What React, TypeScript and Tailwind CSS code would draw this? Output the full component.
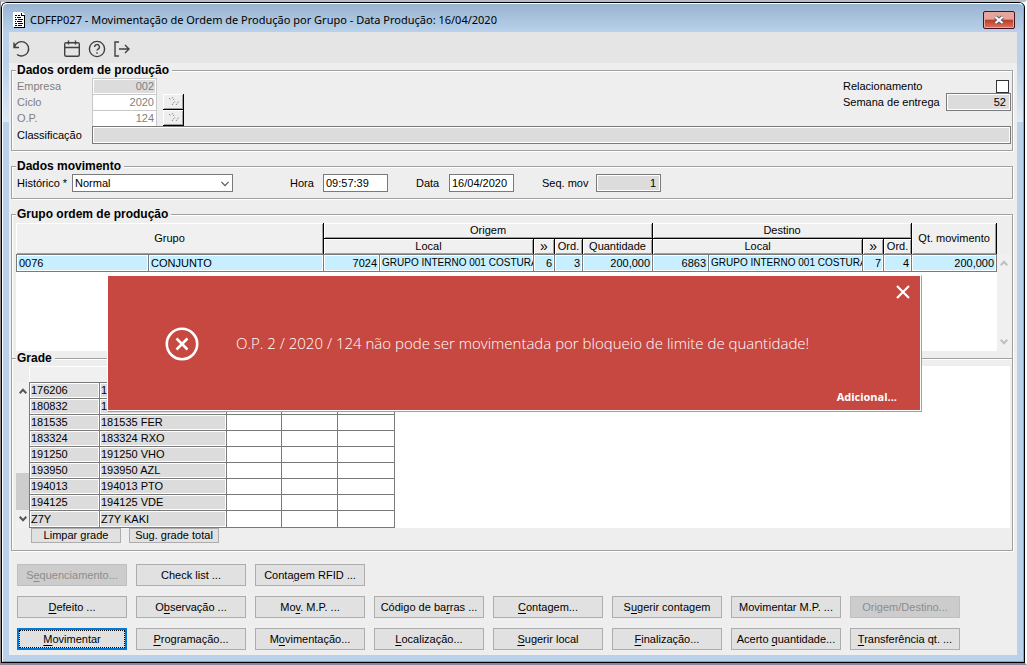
import { useState } from "react";

const ui = "font-['Liberation_Sans',Arial,sans-serif]";
const segoe = "font-['Open_Sans','Noto_Sans',sans-serif]";

const grades = [
  ["176206", "176206"],
  ["180832", "180832"],
  ["181535", "181535 FER"],
  ["183324", "183324 RXO"],
  ["191250", "191250 VHO"],
  ["193950", "193950 AZL"],
  ["194013", "194013 PTO"],
  ["194125", "194125 VDE"],
  ["Z7Y", "Z7Y KAKI"],
];

// "_" marks the access key of the button: the next letter is underlined
const actions = [
  ["S_equenciamento...", "Check list ...", "Conta_gem RFID ..."],
  ["_Defeito ...", "O_bservação ...", "Mo_v. M.P. ...", "Código de ba_rras ...", "_Contagem...", "S_ugerir contagem", "Movimentar M.P. ...", "Origem/Destino..."],
  ["_Movimentar", "_Programação...", "M_ovimentação...", "_Localização...", "_Sugerir local", "_Finalização...", "Acerto _quantidade...", "_Transferência qt. ..."],
];

const disabledActions = ["S_equenciamento...", "Origem/Destino..."];

function Label({ text }: { text: string }) {
  const i = text.indexOf("_");
  if (i < 0) return <>{text}</>;
  return (
    <>
      {text.slice(0, i)}
      <span className="underline underline-offset-2">{text[i + 1]}</span>
      {text.slice(i + 2)}
    </>
  );
}

function Arrow({ down = false, className = "" }: { down?: boolean; className?: string }) {
  return (
    <svg viewBox="0 0 8 6" className={`h-[6px] w-[8px] ${className}`} fill="none" stroke="currentColor" strokeWidth="2">
      <path d={down ? "M0.7 0.8L4 4.2L7.3 0.8" : "M0.7 5.2L4 1.8L7.3 5.2"} />
    </svg>
  );
}

function Group({ title, className = "", children }: { title: string; className?: string; children: React.ReactNode }) {
  return (
    <fieldset className={`mr-1 ml-0.5 min-w-0 border border-[#a0a0a0] pr-px pl-1 shadow-[1px_1px_0_#fff,inset_1px_1px_0_#fff] ${className}`}>
      <legend className="bg-[#eeeeee] pr-[3px] pl-px text-[12px] leading-[15px] font-bold">{title}</legend>
      {children}
    </fieldset>
  );
}

function LookupButton({ label }: { label: string }) {
  return (
    <button
      type="button"
      aria-label={label}
      className="ml-1.5 flex h-4 w-[21px] items-center justify-center border-r border-b border-black bg-[#eeeeee] text-[#8c8c8c] shadow-[inset_1px_1px_0_#fff,inset_-1px_-1px_0_#a0a0a0]"
    >
      <svg viewBox="0 0 11 9" className="h-[9px] w-[11px]" fill="none" stroke="currentColor" strokeDasharray="1.4 0.8">
        <path d="M1 1L3 3M4 0L6 3M4 8L7 4M8 8L11 4" />
      </svg>
    </button>
  );
}

const head = "border-r border-black bg-[#f0f0f0] p-0 text-center font-normal shadow-[inset_1px_1px_0_#fff,inset_-1px_-1px_0_#a0a0a0]";
const cell = "overflow-hidden border border-l-0 border-[#7a7a7a] bg-[#c8efff] px-0.5 py-0 whitespace-nowrap first:border-l shadow-[inset_0_0_0_1px_#fff]";
const readonlyField = "border border-[#7a7a7a] bg-[#dcdcdc] px-1 text-right shadow-[inset_0_0_0_1px_#fff]";
const textField = "h-[18px] w-[65px] border border-[#7a7a7a] bg-white px-0.5";

export default function App() {
  const [open, setOpen] = useState(true);

  return (
    <div className={`relative border-t-2 border-r-2 border-b-2 border-l border-t-[#b9bdc9] border-r-white border-b-[#8a8898] border-l-[#8c8c8c] bg-white text-[11px] text-black ${ui}`}>
      <div className="rounded-t-[6px] border-t border-b border-l border-black bg-[#b9d1ea]">
        <div className="rounded-t-[5px] border-r border-black">
          <div className="rounded-t-[5px] border border-t-white border-r-[#35c8e0] border-b-[#35c8e0] border-l-white bg-[linear-gradient(#b9d1ea_60px,#dfe9f5_118px,#b9d1ea_118px)] px-1.5 pb-1.5">
            <header className="-mx-1.5 flex h-7 items-center rounded-t-[5px] bg-linear-to-b from-[#99b4d1] to-[#b9d1ea] pt-1 pr-2 pl-2.5">
              <svg viewBox="0 0 13 16" className="h-4 w-[13px]" shapeRendering="crispEdges">
                <path d="M0 0h9l3 3v12H0z" fill="#fff" />
                <path d="M12 4v12H1v-1h10V4H8V1h1v2h3z" fill="#000" />
                <path d="M2 3h2v1H2zM5 3h2v1H5zM2 5h1v1H2zM4 5h4v1H4zM2 7h2v1H2zM5 7h5v1H5zM2 9h1v1H2zM4 9h5v1H4zM2 11h2v1H2zM5 11h5v1H5zM2 13h2v1H2zM5 13h4v1H5z" fill="#000" />
              </svg>
              <h1 className="ml-1 font-['Noto_Sans','Open_Sans',sans-serif] text-[11px]">CDFFP027 - Movimentação de Ordem de Produção por Grupo - Data Produção: 16/04/2020</h1>
              <button type="button" aria-label="Fechar janela" className="ml-auto flex h-[18px] w-8 items-center justify-center rounded-[2px] border border-[#4a1020] bg-linear-to-b from-[#e5a59c] from-45% via-[#bb3a24] via-50% to-[#d87563] shadow-[inset_0_0_0_1px_#e8a79c]">
                <svg viewBox="0 0 12 10" className="h-[10px] w-3">
                  <path d="M2.5 2L9.5 8M9.5 2L2.5 8" stroke="#535666" strokeWidth="4" />
                  <path d="M2.5 2L9.5 8M9.5 2L2.5 8" stroke="#fff" strokeWidth="2.2" />
                </svg>
              </button>
            </header>

            <main className="bg-[#eeeeee] pb-[5px]">
              <div className="flex h-[31px] items-center bg-[#e5e5e5] pt-0.5 pl-1 text-[#404040]">
                <button type="button" aria-label="Desfazer">
                  <svg viewBox="0 0 18 18" className="size-[18px]" fill="none" stroke="currentColor" strokeWidth="1.4">
                    <path d="M1 2.5v5h5M1.5 7A7.2 7.2 0 1 1 4 14.5" />
                  </svg>
                </button>
                <button type="button" aria-label="Calendário" className="ml-8">
                  <svg viewBox="0 0 18 18" className="size-[18px]" fill="none" stroke="currentColor" strokeWidth="1.4">
                    <rect x="1.7" y="2.7" width="14.6" height="13.6" rx="1.5" />
                    <path d="M2 7.5h14M5.5 0.5v4M12.5 0.5v4" />
                  </svg>
                </button>
                <button type="button" aria-label="Ajuda" className="ml-[7px]">
                  <svg viewBox="0 0 18 18" className="size-[18px]" fill="none" stroke="currentColor" strokeWidth="1.4">
                    <circle cx="9" cy="9" r="7.6" />
                    <path d="M6.6 7a2.4 2.4 0 1 1 3.5 2.1c-.8.4-1.1.7-1.1 1.5M9 12.2v1.5" />
                  </svg>
                </button>
                <button type="button" aria-label="Sair" className="ml-[7px]">
                  <svg viewBox="0 0 18 18" className="size-[18px]" fill="none" stroke="currentColor" strokeWidth="1.4">
                    <path d="M6 2H2v14h4M6 9h10M12 5l4 4l-4 4" />
                  </svg>
                </button>
              </div>

              <Group title="Dados ordem de produção" className="pb-1.5">
                <div className="flex justify-between pl-px">
                  <div className="text-[#7f7f7f]">
                    <div className="flex h-4 items-center">
                      <label htmlFor="empresa" className="w-[75px]">Empresa</label>
                      <input id="empresa" readOnly value="002" className="h-[17px] w-[65px] border border-[#c8c8c8] bg-[#dcdcdc] px-0.5 text-right shadow-[inset_0_0_0_1px_#fff]" />
                    </div>
                    <div className="flex h-4 items-center">
                      <label htmlFor="ciclo" className="w-[75px]">Ciclo</label>
                      <input id="ciclo" readOnly value="2020" className="h-[17px] w-[65px] border border-[#c8c8c8] bg-white px-0.5 text-right" />
                      <LookupButton label="Pesquisar ciclo" />
                    </div>
                    <div className="flex h-4 items-center">
                      <label htmlFor="op" className="w-[75px]">O.P.</label>
                      <input id="op" readOnly value="124" className="h-[17px] w-[65px] border border-[#c8c8c8] bg-white px-0.5 text-right" />
                      <LookupButton label="Pesquisar O.P." />
                    </div>
                  </div>
                  <div>
                    <div className="flex h-4 items-center justify-between">
                      <label htmlFor="relacionamento">Relacionamento</label>
                      <input id="relacionamento" type="checkbox" className="mt-px mr-0.5 size-[13px] appearance-none border border-[#333] bg-white" />
                    </div>
                    <div className="flex h-4 items-center">
                      <label htmlFor="semana" className="w-[103px]">Semana de entrega</label>
                      <input id="semana" readOnly value="52" className={`h-[18px] w-[65px] ${readonlyField}`} />
                    </div>
                  </div>
                </div>
                <div className="flex h-[18px] items-center pl-px">
                  <label htmlFor="classificacao" className="w-[75px] shrink-0">Classificação</label>
                  <input id="classificacao" readOnly value="" className={`h-[18px] min-w-0 grow ${readonlyField}`} />
                </div>
              </Group>

              <Group title="Dados movimento" className="mt-2 pb-1.5">
                <div className="flex h-[18px] items-center pl-px">
                  <label htmlFor="historico" className="w-[55px]">Histórico *</label>
                  <span className="relative">
                    <select id="historico" className="block h-[18px] w-[161px] appearance-none border border-[#7a7a7a] bg-white px-0.5">
                      <option>Normal</option>
                    </select>
                    <svg viewBox="0 0 8 6" className="pointer-events-none absolute top-[7px] right-1 h-[6px] w-[8px]" fill="none" stroke="#555" strokeWidth="1.2">
                      <path d="M0.4 0.8L4 4.6L7.6 0.8" />
                    </svg>
                  </span>
                  <label htmlFor="hora" className="ml-[57px] w-[33px]">Hora</label>
                  <input id="hora" defaultValue="09:57:39" className={textField} />
                  <label htmlFor="data" className="ml-7 w-[33px]">Data</label>
                  <input id="data" defaultValue="16/04/2020" className={textField} />
                  <label htmlFor="seq" className="ml-7 w-[54px]">Seq. mov</label>
                  <input id="seq" readOnly value="1" className={`h-[18px] w-[65px] ${readonlyField}`} />
                </div>
              </Group>

              <Group title="Grupo ordem de produção" className="mt-2 border-b-0 pb-2">
                <div className="mr-px flex h-[129px] pt-px">
                  <div className="grow overflow-hidden bg-white">
                    <table className="w-[981px] table-fixed border-separate border-spacing-0">
                      <colgroup>
                        <col className="w-[133px]" />
                        <col className="w-[175px]" />
                        <col className="w-[56px]" />
                        <col className="w-[154px]" />
                        <col className="w-[21px]" />
                        <col className="w-[28px]" />
                        <col className="w-[70px]" />
                        <col className="w-[56px]" />
                        <col className="w-[154px]" />
                        <col className="w-[21px]" />
                        <col className="w-[28px]" />
                        <col className="w-[85px]" />
                      </colgroup>
                      <thead>
                        <tr className="h-4">
                          <th rowSpan={2} colSpan={2} className={head}>Grupo</th>
                          <th colSpan={5} className={`border-b leading-[15px] ${head}`}>Origem</th>
                          <th colSpan={4} className={`border-b leading-[15px] ${head}`}>Destino</th>
                          <th rowSpan={2} className={head}>Qt. movimento</th>
                        </tr>
                        <tr className="h-[15px] leading-[15px]">
                          <th colSpan={2} className={head}>Local</th>
                          <th className={`text-[14px] leading-[15px] ${head}`}>»</th>
                          <th className={head}>Ord.</th>
                          <th className={head}>Quantidade</th>
                          <th colSpan={2} className={head}>Local</th>
                          <th className={`text-[14px] leading-[15px] ${head}`}>»</th>
                          <th className={head}>Ord.</th>
                        </tr>
                      </thead>
                      <tbody>
                        <tr className="h-[18px] leading-4">
                          <td className={cell}>0076</td>
                          <td className={cell}>CONJUNTO</td>
                          <td className={`text-right ${cell}`}>7024</td>
                          <td className={`text-[10px] ${cell}`}>GRUPO INTERNO 001 COSTURA</td>
                          <td className={`text-right ${cell}`}>6</td>
                          <td className={`text-right ${cell}`}>3</td>
                          <td className={`text-right ${cell}`}>200,000</td>
                          <td className={`text-right ${cell}`}>6863</td>
                          <td className={`text-[10px] ${cell}`}>GRUPO INTERNO 001 COSTURA</td>
                          <td className={`text-right ${cell}`}>7</td>
                          <td className={`text-right ${cell}`}>4</td>
                          <td className={`text-right ${cell}`}>200,000</td>
                        </tr>
                      </tbody>
                    </table>
                  </div>
                  <div className="mt-[31px] flex w-[13px] shrink-0 flex-col items-center justify-between bg-[#f0f0f0] py-1.5 text-[#bfbfbf]">
                    <Arrow />
                    <Arrow down />
                  </div>
                </div>
              </Group>

              <Group title="Grade" className="-mt-2 pb-[7px]">
                <div className="mr-px flex">
                  <div className="mt-4 flex w-[13px] shrink-0 flex-col items-center bg-[#f0f0f0] py-1.5 text-[#555]">
                    <Arrow />
                    <div className="mt-auto mb-1.5 h-[37px] w-full bg-[#cdcdcd]" />
                    <Arrow down />
                  </div>
                  <div className="grow bg-white">
                    <table className="w-[366px] table-fixed border-separate border-spacing-0">
                      <colgroup>
                        <col className="w-[71px]" />
                        <col className="w-[127px]" />
                        <col className="w-[55px]" />
                        <col className="w-[56px]" />
                        <col className="w-[57px]" />
                      </colgroup>
                      <thead>
                        <tr className="h-[17px]">
                          <th colSpan={5} className="border-b border-[#7a7a7a] bg-[#f0f0f0] p-0 shadow-[inset_1px_1px_0_#fff]" />
                        </tr>
                      </thead>
                      <tbody>
                        {grades.map(([code, name]) => (
                          <tr key={code} className="h-4 last:h-[17px]">
                            <td className="border-r border-b border-l border-[#7a7a7a] bg-[#dcdcdc] px-px py-0 leading-[15px] shadow-[inset_0_0_0_1px_#fff]">{code}</td>
                            <td className="border-r border-b border-[#7a7a7a] bg-[#dcdcdc] px-px py-0 leading-[15px] shadow-[inset_0_0_0_1px_#fff]">{name}</td>
                            <td className="border-r border-b border-[#7a7a7a] p-0" />
                            <td className="border-r border-b border-[#7a7a7a] p-0" />
                            <td className="border-r border-b border-[#7a7a7a] p-0" />
                          </tr>
                        ))}
                      </tbody>
                    </table>
                  </div>
                </div>
                <div className="flex gap-2 pl-[15px]">
                  <button type="button" className="h-[15px] w-[90px] border border-[#adadad] bg-[#e1e1e1] leading-[13px]">Limpar grade</button>
                  <button type="button" className="h-[15px] w-[90px] border border-[#adadad] bg-[#e1e1e1] leading-[13px]">Sug. grade total</button>
                </div>
              </Group>

              <div className="mt-[13px] flex flex-col gap-2.5 pl-2">
                {actions.map((row, i) => (
                  <div key={i} className="flex gap-[9px]">
                    {row.map((text) => (
                      <button
                        key={text}
                        type="button"
                        disabled={disabledActions.includes(text)}
                        className={
                          text === "_Movimentar"
                            ? "h-[22px] w-[110px] border-2 border-[#0078d7] bg-[#e1e1e1] whitespace-nowrap outline-1 -outline-offset-3 outline-black outline-dotted"
                            : "h-[22px] w-[110px] border border-[#adadad] bg-[#e1e1e1] whitespace-nowrap disabled:border-[#bfbfbf] disabled:bg-[#cccccc] disabled:text-[#8c8c8c]"
                        }
                      >
                        <Label text={text} />
                      </button>
                    ))}
                  </div>
                ))}
              </div>
            </main>
          </div>
        </div>
      </div>

      {open && (
        <div role="alertdialog" className={`absolute top-[273px] right-[103px] left-[106px] flex h-[137px] items-center border border-t-white border-r-[#a0a0a0] border-b-[#a0a0a0] border-l-white bg-[#c74840] text-white shadow-[inset_-1px_-1px_0_#fff] ${segoe}`}>
          <svg viewBox="0 0 34 34" className="ml-[57px] size-[34px]" fill="none" stroke="currentColor" strokeWidth="2.6">
            <circle cx="17" cy="17" r="15.2" />
            <path d="M11.5 11.5L22.5 22.5M22.5 11.5L11.5 22.5" />
          </svg>
          <p className="ml-[37px] text-[15px] font-light">O.P. 2 / 2020 / 124 não pode ser movimentada por bloqueio de limite de quantidade!</p>
          <button type="button" aria-label="Fechar" onClick={() => setOpen(false)} className="absolute top-[9px] right-[11px]">
            <svg viewBox="0 0 14 14" className="size-[14px]" stroke="currentColor" strokeWidth="2.2">
              <path d="M1 1L13 13M13 1L1 13" />
            </svg>
          </button>
          <button type="button" className="absolute right-6 bottom-1.5 text-[11px] font-bold">Adicional...</button>
        </div>
      )}
    </div>
  );
}
